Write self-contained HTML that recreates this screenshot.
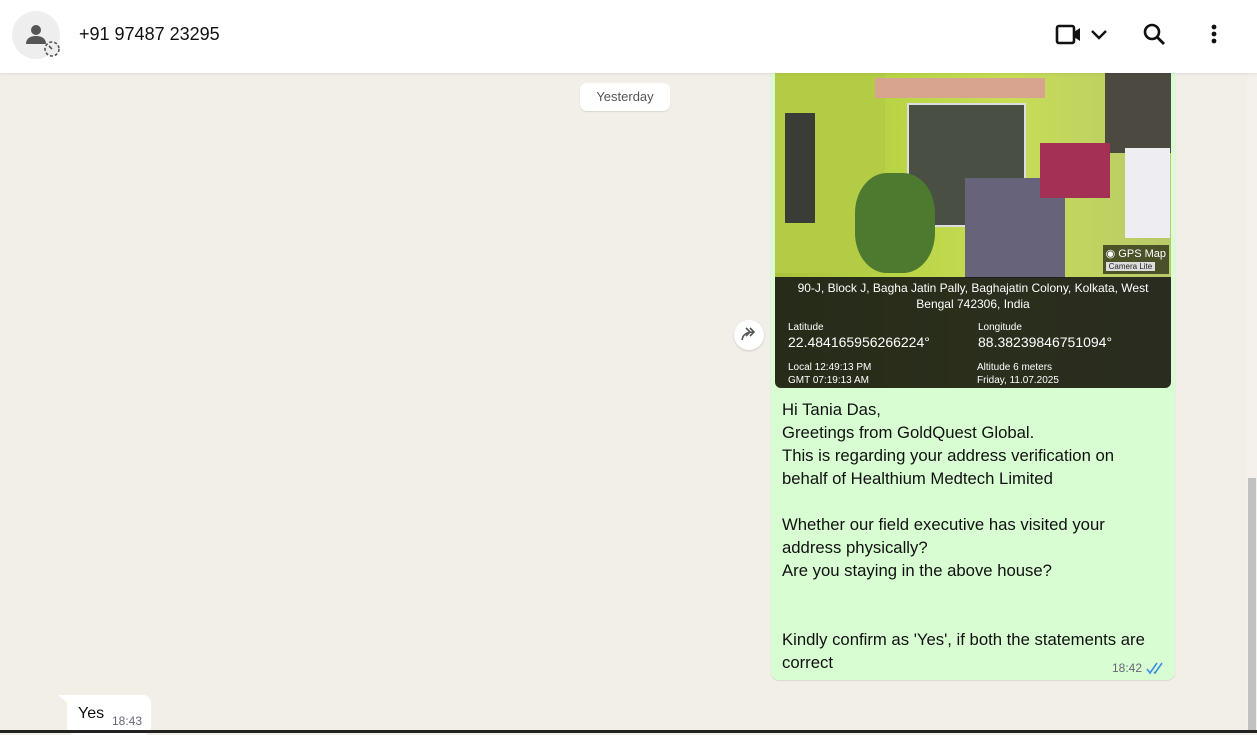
<!DOCTYPE html>
<html><head><style>
body{margin:0;width:1257px;height:733px;overflow:hidden;background:#f2eee8;font-family:"Liberation Sans",sans-serif;position:relative}
.hdr{position:absolute;left:0;top:0;width:1257px;height:73px;background:#fff;box-shadow:0 1px 3px rgba(0,0,0,.08);z-index:5}
.av{position:absolute;left:12px;top:11px;width:48px;height:48px;border-radius:50%;background:#eeeeee}
.name{position:absolute;left:79px;top:24px;font-size:18px;color:#111}
.chip{position:absolute;left:580px;top:83px;width:90px;height:28px;background:#fff;border-radius:7px;font-size:13px;color:#555;text-align:center;line-height:28px;box-shadow:0 1px 1px rgba(0,0,0,.1)}
.bub{position:absolute;left:771px;top:40px;width:404px;height:640px;background:#d9fdd3;border-radius:8px;box-shadow:0 1px 1px rgba(0,0,0,.1)}
.img{position:absolute;left:775px;top:73px;width:396px;height:315px;border-radius:0 0 6px 6px;overflow:hidden;background:linear-gradient(90deg,#a9c23c 0%,#b9d445 30%,#c7dd56 60%,#b8c96a 100%)}
.txt{position:absolute;left:782px;top:398px;font-size:16.7px;line-height:23px;color:#111;white-space:pre}
.fw{position:absolute;left:734px;top:320px;width:30px;height:30px;border-radius:50%;background:#fff;box-shadow:0 1px 2px rgba(0,0,0,.15)}
.yes{position:absolute;left:67px;top:695px;width:84px;height:40px;background:#fff;border-radius:0 8px 8px 8px}
.sb{position:absolute;left:1247px;top:73px;width:10px;height:660px;background:#f4f1ec}
</style></head><body>
<div class="hdr">
<div class="av"><svg width="48" height="48"><circle cx="24" cy="19" r="5" fill="#555"/><path d="M14 33c0-6 5-8 10-8s10 2 10 8z" fill="#555"/><circle cx="40" cy="38" r="7" fill="#eee" stroke="#555" stroke-width="1.6" stroke-dasharray="3 2"/><path d="M40 38l-3-3" stroke="#555" stroke-width="1.6"/></svg></div>
<div class="name">+91 97487 23295</div>
<svg style="position:absolute;left:1055px;top:22px" width="60" height="26"><rect x="2" y="4" width="17" height="17" rx="2" fill="none" stroke="#111" stroke-width="2.6"/><path d="M19 10l6-4v13l-6-4z" fill="#111"/><path d="M37 9l7 7 7-7" fill="none" stroke="#111" stroke-width="2.4"/></svg>
<svg style="position:absolute;left:1142px;top:22px" width="26" height="26"><circle cx="10" cy="10" r="7" fill="none" stroke="#111" stroke-width="2.6"/><path d="M15 15l7 7" stroke="#111" stroke-width="2.8"/></svg>
<svg style="position:absolute;left:1208px;top:22px" width="12" height="26"><circle cx="6" cy="5" r="2.4" fill="#111"/><circle cx="6" cy="12" r="2.4" fill="#111"/><circle cx="6" cy="19" r="2.4" fill="#111"/></svg>
</div>
<div class="chip">Yesterday</div>
<div class="bub"></div>
<div class="img">
<div style="position:absolute;left:0;top:0;width:110px;height:200px;background:#b4cc45"></div>
<div style="position:absolute;left:10px;top:40px;width:30px;height:110px;background:#3a3d35"></div>
<div style="position:absolute;left:132px;top:30px;width:115px;height:120px;background:#4a4f44;border:2px solid #ddd"></div>
<div style="position:absolute;left:100px;top:5px;width:170px;height:20px;background:#d9a48f"></div>
<div style="position:absolute;left:330px;top:0;width:66px;height:80px;background:#4c4a40"></div>
<div style="position:absolute;left:190px;top:105px;width:100px;height:100px;background:#67637a"></div>
<div style="position:absolute;left:265px;top:70px;width:70px;height:55px;background:#a43155"></div>
<div style="position:absolute;left:350px;top:75px;width:45px;height:90px;background:#eeeef2"></div>
<div style="position:absolute;left:80px;top:100px;width:80px;height:100px;background:#4d7a2e;border-radius:40%"></div>
<div style="position:absolute;left:0;top:204px;width:396px;height:111px;background:rgba(20,22,20,.88);color:#fff">
<div style="position:absolute;right:2px;top:-32px;font-size:11px;background:rgba(0,0,0,.6);padding:2px 3px">◉ GPS Map<br><span style="font-size:8px;background:#ddd;color:#222;padding:0 3px">Camera Lite</span></div>
<div style="text-align:center;font-size:12px;line-height:16px;margin-top:3px">90-J, Block J, Bagha Jatin Pally, Baghajatin Colony, Kolkata, West<br>Bengal 742306, India</div>
<div style="position:absolute;left:13px;top:45px;font-size:10px">Latitude</div>
<div style="position:absolute;left:13px;top:57px;font-size:14px">22.484165956266224°</div>
<div style="position:absolute;left:13px;top:84px;font-size:10px;line-height:13px">Local 12:49:13 PM<br>GMT 07:19:13 AM</div>
<div style="position:absolute;left:203px;top:45px;font-size:10px">Longitude</div>
<div style="position:absolute;left:203px;top:57px;font-size:14px">88.38239846751094°</div>
<div style="position:absolute;left:202px;top:84px;font-size:10px;line-height:13px">Altitude 6 meters<br>Friday, 11.07.2025</div>
</div></div>
<div class="txt">Hi Tania Das,
Greetings from GoldQuest Global.
This is regarding your address verification on
behalf of Healthium Medtech Limited

Whether our field executive has visited your
address physically?
Are you staying in the above house?


Kindly confirm as 'Yes', if both the statements are
correct</div>
<div style="position:absolute;left:1112px;top:661px;font-size:12px;color:#667">18:42</div>
<svg style="position:absolute;left:1146px;top:661px" width="20" height="14"><path d="M1 8l3 4 7-10M8 11l1 1 7-10" fill="none" stroke="#3b8fe0" stroke-width="1.6"/></svg>
<div class="fw"><svg width="30" height="30"><path d="M8 20c1-6 5-8 12-8M16 8l4 4-4 4M12 8l4 4-4 4" fill="none" stroke="#555" stroke-width="1.6"/></svg></div>
<svg style="position:absolute;left:58px;top:695px" width="12" height="10"><path d="M0 0h12v10z" fill="#fff"/></svg>
<div class="yes"><span style="position:absolute;left:11px;top:10px;font-size:16px;color:#111">Yes</span><span style="position:absolute;left:45px;top:19px;font-size:12px;color:#667">18:43</span></div>
<div class="sb"><div style="position:absolute;left:1px;top:405px;width:8px;height:255px;background:#c1c1c1"></div></div>
<div style="position:absolute;left:0;top:730px;width:1257px;height:3px;background:#222"></div>
</body></html>
